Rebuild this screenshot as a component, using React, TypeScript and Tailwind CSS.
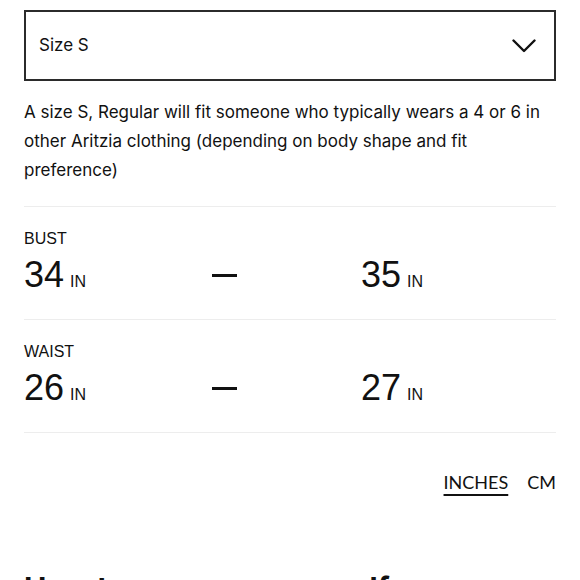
const rows = [
  { label: "BUST", from: 34, to: 35 },
  { label: "WAIST", from: 26, to: 27 },
];

// Measurement row
const Measure = ({ label, from, to }: { label: string; from: number; to: number }) => (
  <div className="border-b border-[#ededed] pt-[22px] pb-[24px]">
    <p className="text-[16px] leading-[20px] text-[#111]" style={{ fontFamily: "'Liberation Sans', Arial, sans-serif" }}>
      {label}
    </p>
    <div
      className="grid grid-cols-[188px_149px_1fr] items-baseline mt-[6px] text-[#111]"
      style={{ fontFamily: "'Liberation Sans', Arial, sans-serif" }}
    >
      <p>
        <span className="text-[36px] leading-[40px]">{from}</span>
        <span className="text-[16px] ml-[6px]">IN</span>
      </p>
      <div className="h-[3px] w-[25px] bg-[#111] self-center" />
      <p>
        <span className="text-[36px] leading-[40px]">{to}</span>
        <span className="text-[16px] ml-[6px]">IN</span>
      </p>
    </div>
  </div>
);

export default function App() {
  return (
    <div className="w-[580px] h-[580px] overflow-hidden bg-white px-6 pt-[10px]" style={{ fontFamily: "Inter, 'Noto Sans', sans-serif" }}>
      {/* Size select */}
      <button className="w-full h-[71px] border-2 border-[#2b2b2b] flex items-center justify-between pl-[13px] pr-[18px] text-[#111]">
        <span className="text-[17px]">Size S</span>
        <svg width="24" height="14" viewBox="0 0 24 14" fill="none" stroke="#111" strokeWidth="2.4" strokeLinecap="round" strokeLinejoin="round">
          <polyline points="1.5,1.5 12,12 22.5,1.5" />
        </svg>
      </button>

      <p className="mt-[17px] text-[17px] leading-[29px] text-[#111] pb-[21px] border-b border-[#ededed]">
        A size S, Regular will fit someone who typically wears a 4 or 6 in other Aritzia clothing (depending on body shape and fit preference)
      </p>

      {rows.map((r) => (
        <Measure key={r.label} {...r} />
      ))}

      <div className="flex justify-end gap-[19px] mt-[36px] text-[18px] text-[#111]" style={{ fontFamily: "Lato, sans-serif" }}>
        <button className="underline underline-offset-[5px] decoration-2">INCHES</button>
        <button>CM</button>
      </div>

      <h2 className="mt-[70px] text-[30px] font-bold text-[#111]">How to measure yourself</h2>
    </div>
  );
}
